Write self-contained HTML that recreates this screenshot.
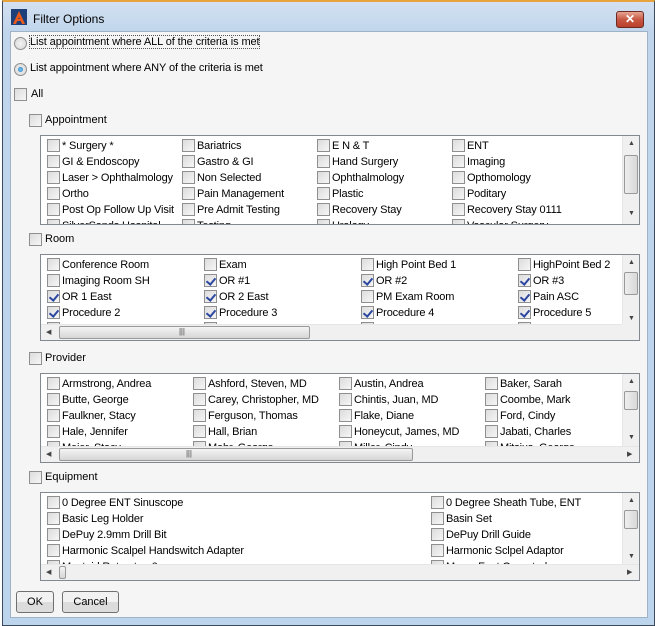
<!DOCTYPE html>
<html><head><style>
*{margin:0;padding:0;box-sizing:border-box}
body{width:655px;height:626px;overflow:hidden;background:#fff;font-family:"Liberation Sans",sans-serif;font-size:11px;color:#000;position:relative}
.frame{position:absolute;left:2px;top:0;width:653px;height:626px;background:linear-gradient(#d3e1f1,#c0d5ec 30px,#bcd4ec);border:1px solid #3c4a5c;border-top:2px solid #e8a33c}
.content{position:absolute;left:10px;top:31px;width:638px;height:587px;background:#f5f5f5;border:1px solid #9fb3c8}
.ab{position:absolute;white-space:nowrap}
.cb{position:absolute;width:13px;height:13px;border:1px solid #8f8f8f;background:linear-gradient(135deg,#dcdcdc,#f6f6f6);}
.cb.c::after{content:"";position:absolute;left:3px;top:1px;width:4px;height:7px;border:solid #2b47a0;border-width:0 2px 2px 0;transform:rotate(40deg)}
.list{position:absolute;left:40px;width:600px;background:#fff;border:1px solid #828790;overflow:hidden;letter-spacing:-0.15px}
.item{position:absolute;white-space:nowrap;height:16px;line-height:14px}
.item .cb{left:0;top:1px}
.item span{position:absolute;left:15px;top:1px}
.vs{position:absolute;right:0;top:0;width:17px;background:#f0f0f0;border-left:1px solid #e6e6e6}
.thumb{position:absolute;left:1px;width:14px;border:1px solid #999;border-radius:2px;background:linear-gradient(90deg,#eee,#d8d8d8)}
.hs{position:absolute;left:0;bottom:0;height:16px;background:#f0f0f0;border-top:1px solid #e6e6e6}
.hthumb{position:absolute;top:1px;height:13px;border:1px solid #999;border-radius:2px;background:linear-gradient(#f4f4f4,#d6d6d6)}
.arr{position:absolute;font-size:7px;color:#444}
.btn{position:absolute;height:22px;border:1px solid #707070;border-radius:3px;background:linear-gradient(#f2f2f2 50%,#dcdcdc 50%);text-align:center;line-height:20px}
.radio{position:absolute;width:13px;height:13px;border-radius:50%;border:1px solid #8e8f8f;background:radial-gradient(#f4f4f4,#d4d4d4)}
.radio.on::after{content:"";position:absolute;left:3px;top:3px;width:5px;height:5px;border-radius:50%;background:radial-gradient(#7fd1ff,#1a6fb0)}
</style></head><body>
<div class="frame"></div>
<div class="ab" style="left:11px;top:9px;width:16px;height:16px;background:#1d3f7a"><svg width="16" height="16"><path d="M2 15 L8 2 L14 15 L11 15 L8 8 L5 15Z" fill="#e85a1c"/><rect x="5" y="10" width="6" height="2" fill="#e85a1c"/></svg></div>
<div class="ab" style="left:33px;top:12px;font-size:12px">Filter Options</div>
<div class="ab" style="left:616px;top:11px;width:28px;height:17px;border:1px solid #6d2a22;border-radius:3px;background:linear-gradient(#e8a493,#c75844 50%,#b8402c);color:#fff;font-weight:bold;text-align:center;line-height:15px;font-size:12px">✕</div>
<div class="content"></div>

<div class="radio" style="left:14px;top:37px"></div>
<div class="ab" style="left:30px;top:36px;outline:1px dotted #555;letter-spacing:-0.1px">List appointment where ALL of the criteria is met</div>
<div class="radio on" style="left:14px;top:63px"></div>
<div class="ab" style="left:30px;top:62px;letter-spacing:-0.1px">List appointment where ANY of the criteria is met</div>
<div class="cb" style="left:14px;top:88px"></div><div class="ab" style="left:31px;top:88px">All</div>

<div class="cb" style="left:29px;top:114px"></div><div class="ab" style="left:45px;top:114px">Appointment</div>
<div class="list" style="top:135px;height:90px">
 <div class="item" style="left:6px;top:2px"><div class="cb"></div><span>* Surgery *</span></div>
 <div class="item" style="left:141px;top:2px"><div class="cb"></div><span>Bariatrics</span></div>
 <div class="item" style="left:276px;top:2px"><div class="cb"></div><span>E N &amp; T</span></div>
 <div class="item" style="left:411px;top:2px"><div class="cb"></div><span>ENT</span></div>
 <div class="item" style="left:6px;top:18px"><div class="cb"></div><span>GI &amp; Endoscopy</span></div>
 <div class="item" style="left:141px;top:18px"><div class="cb"></div><span>Gastro &amp; GI</span></div>
 <div class="item" style="left:276px;top:18px"><div class="cb"></div><span>Hand Surgery</span></div>
 <div class="item" style="left:411px;top:18px"><div class="cb"></div><span>Imaging</span></div>
 <div class="item" style="left:6px;top:34px"><div class="cb"></div><span>Laser &gt; Ophthalmology</span></div>
 <div class="item" style="left:141px;top:34px"><div class="cb"></div><span>Non Selected</span></div>
 <div class="item" style="left:276px;top:34px"><div class="cb"></div><span>Ophthalmology</span></div>
 <div class="item" style="left:411px;top:34px"><div class="cb"></div><span>Opthomology</span></div>
 <div class="item" style="left:6px;top:50px"><div class="cb"></div><span>Ortho</span></div>
 <div class="item" style="left:141px;top:50px"><div class="cb"></div><span>Pain Management</span></div>
 <div class="item" style="left:276px;top:50px"><div class="cb"></div><span>Plastic</span></div>
 <div class="item" style="left:411px;top:50px"><div class="cb"></div><span>Poditary</span></div>
 <div class="item" style="left:6px;top:66px"><div class="cb"></div><span>Post Op Follow Up Visit</span></div>
 <div class="item" style="left:141px;top:66px"><div class="cb"></div><span>Pre Admit Testing</span></div>
 <div class="item" style="left:276px;top:66px"><div class="cb"></div><span>Recovery Stay</span></div>
 <div class="item" style="left:411px;top:66px"><div class="cb"></div><span>Recovery Stay 0111</span></div>
 <div class="item" style="left:6px;top:82px"><div class="cb"></div><span>SilverSands Hospital</span></div>
 <div class="item" style="left:141px;top:82px"><div class="cb"></div><span>Testing</span></div>
 <div class="item" style="left:276px;top:82px"><div class="cb"></div><span>Urology</span></div>
 <div class="item" style="left:411px;top:82px"><div class="cb"></div><span>Vascular Surgery</span></div>
 <div class="vs" style="height:88px"><div class="arr" style="left:5px;top:4px">▲</div><div class="thumb" style="top:19px;height:39px"></div><div class="arr" style="left:5px;top:74px">▼</div></div>
</div>

<div class="cb" style="left:29px;top:233px"></div><div class="ab" style="left:45px;top:233px">Room</div>
<div class="list" style="top:254px;height:87px">
 <div class="item" style="left:6px;top:2px"><div class="cb"></div><span>Conference Room</span></div>
 <div class="item" style="left:163px;top:2px"><div class="cb"></div><span>Exam</span></div>
 <div class="item" style="left:320px;top:2px"><div class="cb"></div><span>High Point Bed 1</span></div>
 <div class="item" style="left:477px;top:2px"><div class="cb"></div><span>HighPoint Bed 2</span></div>
 <div class="item" style="left:6px;top:18px"><div class="cb"></div><span>Imaging Room SH</span></div>
 <div class="item" style="left:163px;top:18px"><div class="cb c"></div><span>OR #1</span></div>
 <div class="item" style="left:320px;top:18px"><div class="cb c"></div><span>OR #2</span></div>
 <div class="item" style="left:477px;top:18px"><div class="cb c"></div><span>OR #3</span></div>
 <div class="item" style="left:6px;top:34px"><div class="cb c"></div><span>OR 1 East</span></div>
 <div class="item" style="left:163px;top:34px"><div class="cb c"></div><span>OR 2 East</span></div>
 <div class="item" style="left:320px;top:34px"><div class="cb"></div><span>PM Exam Room</span></div>
 <div class="item" style="left:477px;top:34px"><div class="cb c"></div><span>Pain ASC</span></div>
 <div class="item" style="left:6px;top:50px"><div class="cb c"></div><span>Procedure 2</span></div>
 <div class="item" style="left:163px;top:50px"><div class="cb c"></div><span>Procedure 3</span></div>
 <div class="item" style="left:320px;top:50px"><div class="cb c"></div><span>Procedure 4</span></div>
 <div class="item" style="left:477px;top:50px"><div class="cb c"></div><span>Procedure 5</span></div>
 <div class="item" style="left:6px;top:66px"><div class="cb"></div><span>Recovery Room 2 ASC</span></div>
 <div class="item" style="left:163px;top:66px"><div class="cb"></div><span>Recovery Room 3</span></div>
 <div class="item" style="left:320px;top:66px"><div class="cb"></div><span>Recovery Room 4</span></div>
 <div class="item" style="left:477px;top:66px"><div class="cb"></div><span>Recovery Room 6</span></div>
 <div class="vs" style="height:72px"><div class="arr" style="left:5px;top:4px">▲</div><div class="thumb" style="top:17px;height:23px"></div><div class="arr" style="left:5px;top:60px">▼</div></div>
 <div class="hs" style="width:582px"><div class="arr" style="left:5px;top:3px">◀</div><div class="hthumb" style="left:18px;width:251px"></div><div class="ab" style="left:138px;top:2px;font-size:8px;color:#444">|||</div></div>
 <div class="ab" style="right:0;bottom:0;width:17px;height:16px;background:#f0f0f0"></div>
</div>

<div class="cb" style="left:29px;top:352px"></div><div class="ab" style="left:45px;top:352px">Provider</div>
<div class="list" style="top:373px;height:90px">
 <div class="item" style="left:6px;top:2px"><div class="cb"></div><span>Armstrong, Andrea</span></div>
 <div class="item" style="left:152px;top:2px"><div class="cb"></div><span>Ashford, Steven, MD</span></div>
 <div class="item" style="left:298px;top:2px"><div class="cb"></div><span>Austin, Andrea</span></div>
 <div class="item" style="left:444px;top:2px"><div class="cb"></div><span>Baker, Sarah</span></div>
 <div class="item" style="left:6px;top:18px"><div class="cb"></div><span>Butte, George</span></div>
 <div class="item" style="left:152px;top:18px"><div class="cb"></div><span>Carey, Christopher, MD</span></div>
 <div class="item" style="left:298px;top:18px"><div class="cb"></div><span>Chintis, Juan, MD</span></div>
 <div class="item" style="left:444px;top:18px"><div class="cb"></div><span>Coombe, Mark</span></div>
 <div class="item" style="left:6px;top:34px"><div class="cb"></div><span>Faulkner, Stacy</span></div>
 <div class="item" style="left:152px;top:34px"><div class="cb"></div><span>Ferguson, Thomas</span></div>
 <div class="item" style="left:298px;top:34px"><div class="cb"></div><span>Flake, Diane</span></div>
 <div class="item" style="left:444px;top:34px"><div class="cb"></div><span>Ford, Cindy</span></div>
 <div class="item" style="left:6px;top:50px"><div class="cb"></div><span>Hale, Jennifer</span></div>
 <div class="item" style="left:152px;top:50px"><div class="cb"></div><span>Hall, Brian</span></div>
 <div class="item" style="left:298px;top:50px"><div class="cb"></div><span>Honeycut, James, MD</span></div>
 <div class="item" style="left:444px;top:50px"><div class="cb"></div><span>Jabati, Charles</span></div>
 <div class="item" style="left:6px;top:66px"><div class="cb"></div><span>Meier, Stacy</span></div>
 <div class="item" style="left:152px;top:66px"><div class="cb"></div><span>Mohr, George</span></div>
 <div class="item" style="left:298px;top:66px"><div class="cb"></div><span>Miller, Cindy</span></div>
 <div class="item" style="left:444px;top:66px"><div class="cb"></div><span>Mitsius, George</span></div>
 <div class="vs" style="height:72px"><div class="arr" style="left:5px;top:4px">▲</div><div class="thumb" style="top:17px;height:19px"></div><div class="arr" style="left:5px;top:60px">▼</div></div>
 <div class="hs" style="width:598px"><div class="arr" style="left:5px;top:3px">◀</div><div class="hthumb" style="left:18px;width:354px"></div><div class="ab" style="left:145px;top:2px;font-size:8px;color:#444">|||</div><div class="arr" style="left:586px;top:3px">▶</div></div>
</div>

<div class="cb" style="left:29px;top:471px"></div><div class="ab" style="left:45px;top:471px">Equipment</div>
<div class="list" style="top:492px;height:89px">
 <div class="item" style="left:6px;top:2px"><div class="cb"></div><span>0 Degree ENT Sinuscope</span></div>
 <div class="item" style="left:390px;top:2px"><div class="cb"></div><span>0 Degree Sheath Tube, ENT</span></div>
 <div class="item" style="left:6px;top:18px"><div class="cb"></div><span>Basic Leg Holder</span></div>
 <div class="item" style="left:390px;top:18px"><div class="cb"></div><span>Basin Set</span></div>
 <div class="item" style="left:6px;top:34px"><div class="cb"></div><span>DePuy 2.9mm Drill Bit</span></div>
 <div class="item" style="left:390px;top:34px"><div class="cb"></div><span>DePuy Drill Guide</span></div>
 <div class="item" style="left:6px;top:50px"><div class="cb"></div><span>Harmonic Scalpel Handswitch Adapter</span></div>
 <div class="item" style="left:390px;top:50px"><div class="cb"></div><span>Harmonic Sclpel Adaptor</span></div>
 <div class="item" style="left:6px;top:66px"><div class="cb"></div><span>Mastoid Retractor, 6x</span></div>
 <div class="item" style="left:390px;top:66px"><div class="cb"></div><span>Mayo, Foot Operated</span></div>
 <div class="vs" style="height:72px"><div class="arr" style="left:5px;top:4px">▲</div><div class="thumb" style="top:17px;height:19px"></div><div class="arr" style="left:5px;top:60px">▼</div></div>
 <div class="hs" style="width:598px"><div class="arr" style="left:5px;top:3px">◀</div><div class="hthumb" style="left:18px;width:7px"></div><div class="arr" style="left:586px;top:3px">▶</div></div>
</div>

<div class="btn" style="left:16px;top:591px;width:38px">OK</div>
<div class="btn" style="left:62px;top:591px;width:57px">Cancel</div>
</body></html>
